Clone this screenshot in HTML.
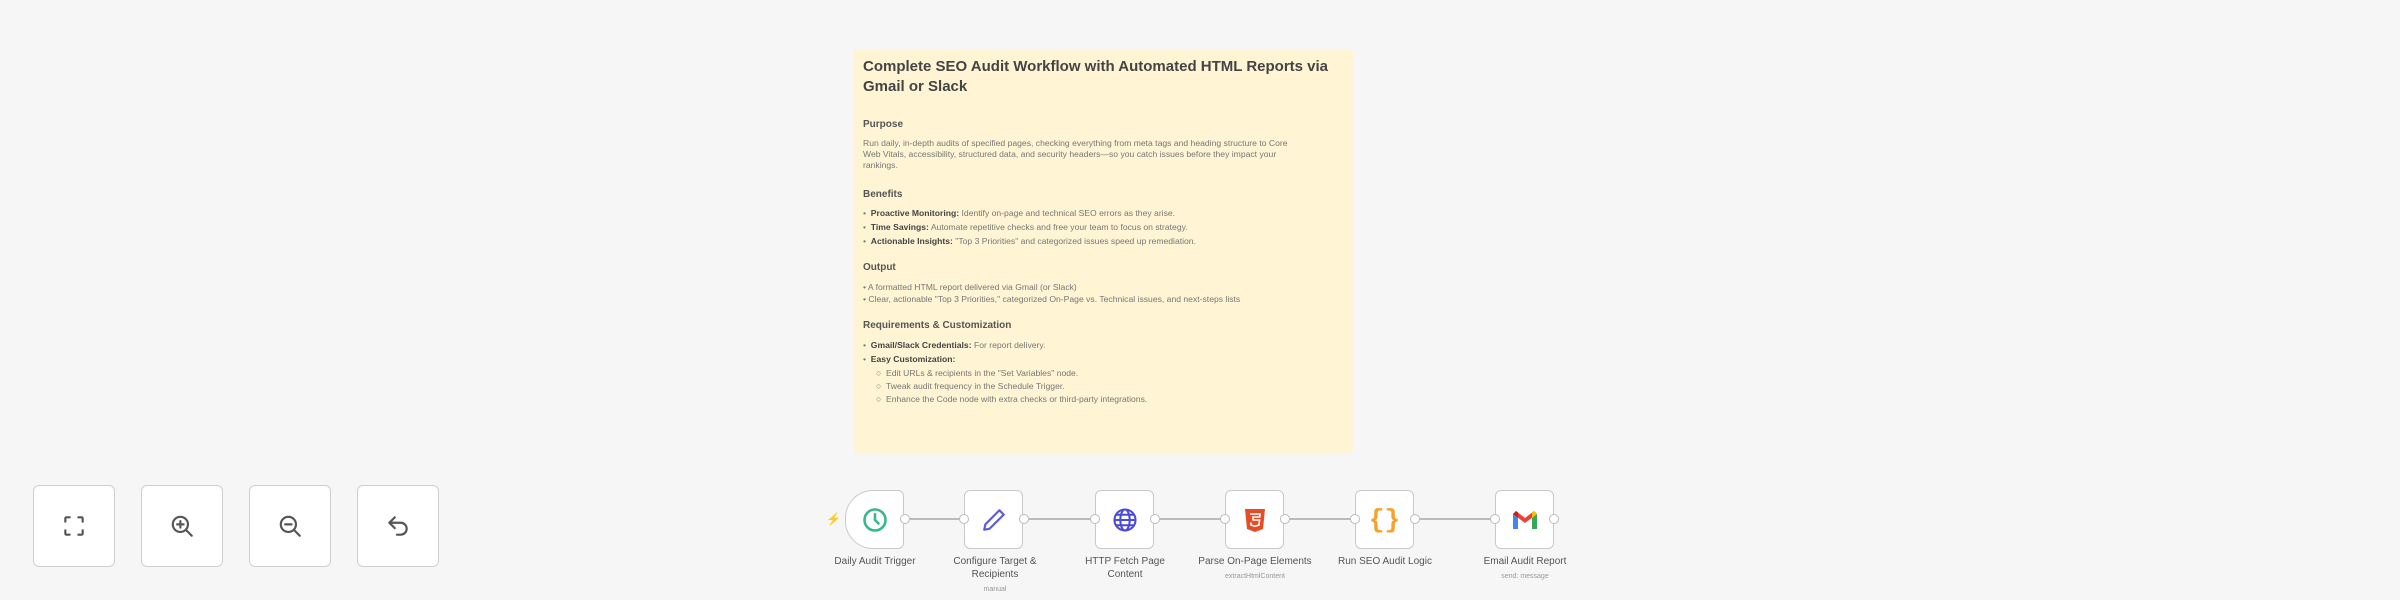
<!DOCTYPE html>
<html><head><meta charset="utf-8"><style>
*{margin:0;padding:0;box-sizing:border-box}
body{width:2400px;height:600px;overflow:hidden;background:#f6f6f6;font-family:"Liberation Sans",sans-serif;position:relative;color:#333}
.sticky{position:absolute;left:854px;top:49px;width:499px;height:404px;background:#fff4d3;border-radius:3px;padding:0 9px}
.t{position:absolute;left:9px;white-space:nowrap}
.h1{font-size:15px;font-weight:bold;color:#444;line-height:20px}
.h2{font-size:10px;font-weight:bold;color:#555}
.p{font-size:8.6px;color:#777;line-height:11px}
.p b{color:#444}
.btn{position:absolute;top:485px;width:82px;height:82px;background:#fff;border:1.5px solid #cfcfcf;border-radius:6px;display:flex;align-items:center;justify-content:center}
.node{position:absolute;top:490px;width:59px;height:59px;background:#fff;border:1.5px solid #c9c9c9;border-radius:6px;display:flex;align-items:center;justify-content:center}
.hdl{position:absolute;width:10px;height:10px;border-radius:50%;background:#fff;border:1.5px solid #bbb;top:514px}
.line{position:absolute;height:2px;background:#bbb;top:518px}
.lbl{position:absolute;top:555px;width:140px;text-align:center;font-size:10px;color:#555;line-height:13px}
.sub{font-size:7px;color:#999;display:block;margin-top:2px}
</style></head><body>
<div class="sticky">
<div class="t h1" style="top:8px">Complete SEO Audit Workflow with Automated HTML Reports via<br>Gmail or Slack</div>
<div class="t h2" style="top:70px">Purpose</div>
<div class="t p" style="top:89px">Run daily, in-depth audits of specified pages, checking everything from meta tags and heading structure to Core<br>Web Vitals, accessibility, structured data, and security headers—so you catch issues before they impact your<br>rankings.</div>
<div class="t h2" style="top:140px">Benefits</div>
<div class="t p" style="top:159px">• &nbsp;<b>Proactive Monitoring:</b> Identify on-page and technical SEO errors as they arise.</div>
<div class="t p" style="top:173px">• &nbsp;<b>Time Savings:</b> Automate repetitive checks and free your team to focus on strategy.</div>
<div class="t p" style="top:187px">• &nbsp;<b>Actionable Insights:</b> "Top 3 Priorities" and categorized issues speed up remediation.</div>
<div class="t h2" style="top:213px">Output</div>
<div class="t p" style="top:233px">• A formatted HTML report delivered via Gmail (or Slack)</div>
<div class="t p" style="top:245px">• Clear, actionable "Top 3 Priorities," categorized On-Page vs. Technical issues, and next-steps lists</div>
<div class="t h2" style="top:271px">Requirements &amp; Customization</div>
<div class="t p" style="top:291px">• &nbsp;<b>Gmail/Slack Credentials:</b> For report delivery.</div>
<div class="t p" style="top:305px">• &nbsp;<b>Easy Customization:</b></div>
<div class="t p" style="top:319px;left:22px">○ &nbsp;Edit URLs &amp; recipients in the "Set Variables" node.</div>
<div class="t p" style="top:332px;left:22px">○ &nbsp;Tweak audit frequency in the Schedule Trigger.</div>
<div class="t p" style="top:345px;left:22px">○ &nbsp;Enhance the Code node with extra checks or third-party integrations.</div>
</div>

<div class="btn" style="left:33px"><svg width="26" height="26" viewBox="0 0 24 24" fill="none" stroke="#555" stroke-width="2" stroke-linecap="round"><path d="M4 8V5a1 1 0 0 1 1-1h3M16 4h3a1 1 0 0 1 1 1v3M20 16v3a1 1 0 0 1-1 1h-3M8 20H5a1 1 0 0 1-1-1v-3"/></svg></div>
<div class="btn" style="left:141px"><svg width="26" height="26" viewBox="0 0 24 24" fill="none" stroke="#555" stroke-width="2" stroke-linecap="round"><circle cx="10.5" cy="10.5" r="7"/><path d="M15.5 15.5 21 21M10.5 7.5v6M7.5 10.5h6"/></svg></div>
<div class="btn" style="left:249px"><svg width="26" height="26" viewBox="0 0 24 24" fill="none" stroke="#555" stroke-width="2" stroke-linecap="round"><circle cx="10.5" cy="10.5" r="7"/><path d="M15.5 15.5 21 21M7.5 10.5h6"/></svg></div>
<div class="btn" style="left:357px"><svg width="26" height="26" viewBox="0 0 24 24" fill="none" stroke="#555" stroke-width="2" stroke-linecap="round" stroke-linejoin="round"><path d="M9 14 4 9l5-5"/><path d="M4 9h10.5a5.5 5.5 0 0 1 0 11H11"/></svg></div>

<div style="position:absolute;left:826px;top:512px;color:#ff6d5a;font-size:12px">⚡</div>
<div class="node" style="left:845px;border-radius:28px 6px 6px 28px"><svg width="28" height="28" viewBox="0 0 24 24" fill="none" stroke="#35b88a" stroke-width="2.2" stroke-linecap="round"><circle cx="12" cy="12" r="9"/><path d="M12 7v5l3 3"/></svg></div>
<div class="node" style="left:964px"><svg width="26" height="26" viewBox="0 0 24 24" fill="none" stroke="#5b5bdc" stroke-width="2" stroke-linejoin="round"><path d="M17 3l4 4L8 20l-5 1 1-5z"/></svg></div>
<div class="node" style="left:1095px"><svg width="28" height="28" viewBox="0 0 24 24" fill="none" stroke="#4b4bd8" stroke-width="1.8"><circle cx="12" cy="12" r="9"/><ellipse cx="12" cy="12" rx="4" ry="9"/><path d="M3 12h18M4.5 7.5h15M4.5 16.5h15"/></svg></div>
<div class="node" style="left:1225px"><svg width="24" height="28" viewBox="0 0 24 28"><path d="M2 3h20l-2 20-8 3-8-3z" fill="#e44d26"/><path d="M7 8h10l-.3 3H10l.2 3h6.3l-.5 5-4 1.3-4-1.3-.2-2.5" fill="none" stroke="#fff" stroke-width="1.6"/></svg></div>
<div class="node" style="left:1355px"><span style="color:#f7a12a;font-size:26px;font-weight:bold;font-family:'Liberation Mono',monospace">{}</span></div>
<div class="node" style="left:1495px"><svg width="28" height="22" viewBox="0 0 28 22"><path d="M2 20V5l5 4v11z" fill="#4285f4"/><path d="M21 20V9l5-4v15z" fill="#34a853"/><path d="M2 5l12 9 12-9-3-3-9 7-9-7z" fill="#ea4335"/><path d="M21 9l5-4-3-3-2 1.5z" fill="#fbbc04"/><path d="M2 5l5 4V3.5L5 2z" fill="#c5221f"/></svg></div>

<div class="line" style="left:910px;width:52px"></div>
<div class="line" style="left:1029px;width:64px"></div>
<div class="line" style="left:1160px;width:63px"></div>
<div class="line" style="left:1290px;width:63px"></div>
<div class="line" style="left:1420px;width:73px"></div>
<div class="hdl" style="left:900px"></div>
<div class="hdl" style="left:959px"></div><div class="hdl" style="left:1019px"></div>
<div class="hdl" style="left:1090px"></div><div class="hdl" style="left:1150px"></div>
<div class="hdl" style="left:1220px"></div><div class="hdl" style="left:1280px"></div>
<div class="hdl" style="left:1350px"></div><div class="hdl" style="left:1410px"></div>
<div class="hdl" style="left:1490px"></div><div class="hdl" style="left:1549px"></div>

<div class="lbl" style="left:805px">Daily Audit Trigger</div>
<div class="lbl" style="left:925px">Configure Target &amp;<br>Recipients<span class="sub">manual</span></div>
<div class="lbl" style="left:1055px">HTTP Fetch Page<br>Content</div>
<div class="lbl" style="left:1185px">Parse On-Page Elements<span class="sub">extractHtmlContent</span></div>
<div class="lbl" style="left:1315px">Run SEO Audit Logic</div>
<div class="lbl" style="left:1455px">Email Audit Report<span class="sub">send: message</span></div>
</body></html>
